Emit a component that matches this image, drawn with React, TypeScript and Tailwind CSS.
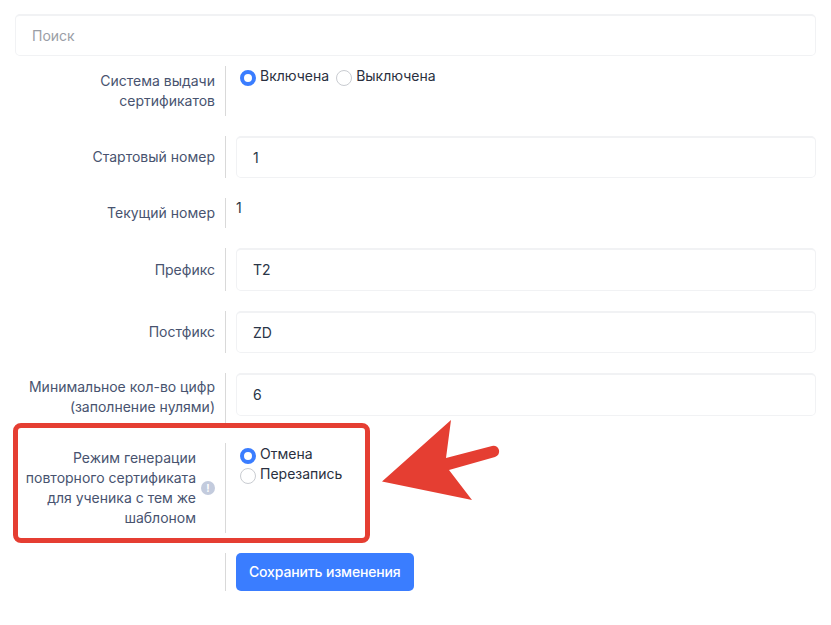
const Radio = ({ checked }: { checked?: boolean }) => (
  <span
    className={
      checked
        ? "w-4 h-4 rounded-full border-[4px] border-[#3a7dff] bg-white shrink-0"
        : "w-4 h-4 rounded-full border border-[#c9ccd1] bg-white shrink-0"
    }
  ></span>
);

const Input = ({ value, className }: { value: string; className?: string }) => (
  <div className={"w-full flex items-center pl-4 rounded-[5px] bg-white border border-t-2 border-[#f1f2f4] text-sm text-[#2a3547] " + (className || "h-[42px]")}>
    {value}
  </div>
);

const Row = ({ label, children, className }: { label: React.ReactNode; children: React.ReactNode; className?: string }) => (
  <div className={"flex mb-5 " + (className || "")}>
    <div className="w-[210px] shrink-0 pr-2.5 py-[5px] text-right text-sm leading-5 text-[#48536f] flex items-center justify-end">{label}</div>
    <div className="flex-1 border-l border-[#d9d9d9] pl-2.5">{children}</div>
  </div>
);

export default function App() {
  return (
    <div className="relative w-[831px] h-[625px] bg-white overflow-hidden px-[15px] pt-3.5 font-['Inter',sans-serif]">
      <div className="h-[42px] flex items-center pl-4 rounded-[5px] border border-t-2 border-[#f1f2f4] text-sm text-[#9a9ea6] mb-2.5">
        Поиск
      </div>

      <Row label={<span>Система выдачи<br />сертификатов</span>} className="h-[50px]">
        <div className="flex items-start pl-1 text-sm leading-5 text-[#2a3040]">
          <span className="flex items-center gap-1 h-5 mt-[2px]">
            <Radio checked />
            <span className="-mt-1">Включена</span>
          </span>
          <span className="flex items-center gap-1 h-5 mt-[2px] ml-[7px]">
            <Radio />
            <span className="-mt-1">Выключена</span>
          </span>
        </div>
      </Row>

      <Row label="Стартовый номер" className="h-[42px]">
        <Input value="1" />
      </Row>

      <Row label="Текущий номер" className="h-[30px]">
        <div className="text-sm leading-5 text-[#2a3547]">1</div>
      </Row>

      <Row label="Префикс" className="h-[43px]">
        <Input value="T2" className="h-[43px]" />
      </Row>

      <Row label="Постфикс" className="h-[42px]">
        <Input value="ZD" />
      </Row>

      <Row label={<span className="-mt-0.5">Минимальное кол-во цифр<br />(заполнение нулями)</span>} className="h-[50px]">
        <Input value="6" className="h-[43px]" />
      </Row>

      <div className="flex mb-5 h-[90px]">
        <div className="w-[210px] shrink-0 pr-2.5 flex items-center justify-end gap-[5px]">
          <div className="w-[176px] text-right text-sm leading-5 text-[#48536f]">
            Режим генерации повторного сертификата для ученика с тем же шаблоном
          </div>
          <span className="w-[14px] h-[14px] rounded-full bg-[#c3cbdd] text-white text-[10px] font-bold leading-[14px] text-center shrink-0">!</span>
        </div>
        <div className="flex-1 border-l border-[#d9d9d9] pl-[14px] text-sm leading-5 text-[#2a3040]">
          <div className="flex items-center gap-1 h-5 mt-[3px]">
            <Radio checked />
            <span className="-mt-1">Отмена</span>
          </div>
          <div className="flex items-center gap-1 h-5">
            <Radio />
            <span className="-mt-[5px]">Перезапись</span>
          </div>
        </div>
      </div>

      <div className="flex h-[38px]">
        <div className="w-[210px] shrink-0"></div>
        <div className="flex-1 border-l border-[#d9d9d9] pl-2.5">
          <button className="h-[38px] px-[13px] rounded-[5px] bg-[#3a7dff] text-white text-sm font-medium tracking-[-0.15px]">
            Сохранить изменения
          </button>
        </div>
      </div>

      <div className="absolute left-[13px] top-[423px] w-[357px] h-[120px] border-[5px] border-[#e53e32] rounded-[8px] pointer-events-none"></div>

      <svg className="absolute left-[370px] top-[410px]" width="140" height="100" viewBox="370 410 140 100">
        <path d="M382 481.500 L451 420 L446 458 L492 446 Q497 445 499 450 Q500 455 495 457 L449 470 L472 500 Z" fill="#e53e32" />
      </svg>
    </div>
  );
}
